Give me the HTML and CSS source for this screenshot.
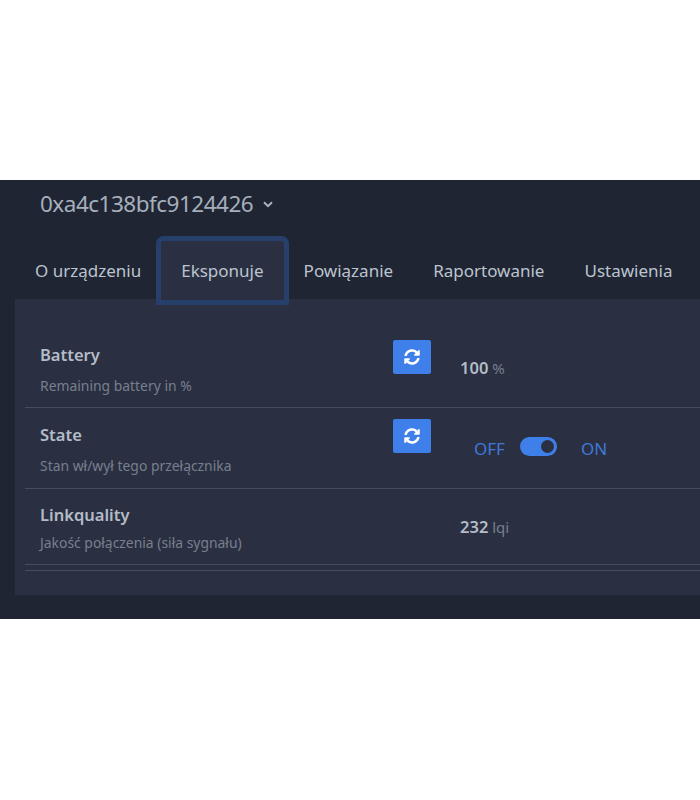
FILE: index.html
```html
<!DOCTYPE html>
<html lang="pl">
  <head>
    <meta charset="utf-8" />
    <title>0xa4c138bfc9124426</title>
    <link rel="stylesheet" href="styles.css">
  </head>
  <body>
    <div class="device">
      <div class="device-title">
        <span>0xa4c138bfc9124426</span>
        <svg class="chevron" width="10" height="7" viewBox="0 0 10 7"><path d="M1 1.2 5 5.2 9 1.2" fill="none" stroke="#a9b2bf" stroke-width="2"/></svg>
      </div>
      <ul class="tabs">
        <li>O urządzeniu</li>
        <li class="active">Eksponuje</li>
        <li>Powiązanie</li>
        <li>Raportowanie</li>
        <li>Ustawienia</li>
      </ul>
      <div class="panel">
        <div class="row row-battery">
          <div class="info">
            <div class="name">Battery</div>
            <div class="desc">Remaining battery in %</div>
          </div>
          <button class="refresh" type="button">
            <svg width="16" height="16" viewBox="0 0 512 512"><path fill="#fff" d="M370.72 133.28C339.458 104.008 298.888 87.962 255.848 88c-77.458.068-144.328 53.178-162.791 126.85-1.344 5.363-6.122 9.15-11.651 9.15H24.103c-7.498 0-13.194-6.807-11.807-14.176C33.933 94.924 134.813 8 256 8c66.448 0 126.791 26.136 171.315 68.685L463.03 40.97C478.149 25.851 504 36.559 504 57.941V192c0 13.255-10.745 24-24 24H345.941c-21.382 0-32.09-25.851-16.971-40.971l41.75-41.749zM32 296h134.059c21.382 0 32.09 25.851 16.971 40.971l-41.75 41.75c31.262 29.273 71.835 45.319 114.876 45.28 77.418-.07 144.315-53.144 162.787-126.849 1.344-5.363 6.122-9.15 11.651-9.15h57.304c7.498 0 13.194 6.807 11.807 14.176C478.067 417.076 377.187 504 256 504c-66.448 0-126.791-26.136-171.315-68.685L48.97 471.03C33.851 486.149 8 475.441 8 454.059V320c0-13.255 10.745-24 24-24z"/></svg>
          </button>
          <div class="value"><b>100</b> <span>%</span></div>
        </div>
        <div class="row row-state">
          <div class="info">
            <div class="name">State</div>
            <div class="desc">Stan wł/wył tego przełącznika</div>
          </div>
          <button class="refresh" type="button">
            <svg width="16" height="16" viewBox="0 0 512 512"><path fill="#fff" d="M370.72 133.28C339.458 104.008 298.888 87.962 255.848 88c-77.458.068-144.328 53.178-162.791 126.85-1.344 5.363-6.122 9.15-11.651 9.15H24.103c-7.498 0-13.194-6.807-11.807-14.176C33.933 94.924 134.813 8 256 8c66.448 0 126.791 26.136 171.315 68.685L463.03 40.97C478.149 25.851 504 36.559 504 57.941V192c0 13.255-10.745 24-24 24H345.941c-21.382 0-32.09-25.851-16.971-40.971l41.75-41.749zM32 296h134.059c21.382 0 32.09 25.851 16.971 40.971l-41.75 41.75c31.262 29.273 71.835 45.319 114.876 45.28 77.418-.07 144.315-53.144 162.787-126.849 1.344-5.363 6.122-9.15 11.651-9.15h57.304c7.498 0 13.194 6.807 11.807 14.176C478.067 417.076 377.187 504 256 504c-66.448 0-126.791-26.136-171.315-68.685L48.97 471.03C33.851 486.149 8 475.441 8 454.059V320c0-13.255 10.745-24 24-24z"/></svg>
          </button>
          <div class="switch">
            <span>OFF</span>
            <i class="toggle"></i>
            <span>ON</span>
          </div>
        </div>
        <div class="row row-link">
          <div class="info">
            <div class="name">Linkquality</div>
            <div class="desc">Jakość połączenia (siła sygnału)</div>
          </div>
          <div class="value"><b>232</b> <span>lqi</span></div>
        </div>
        <div class="rule"></div>
      </div>
    </div>
  </body>
</html>
```

FILE: styles.css
```css
body {
  margin: 0;
  background-color: #ffffff;
  font-family: "Noto Sans", "Open Sans", sans-serif;
}

.device {
  box-sizing: border-box;
  height: 439px;
  margin-top: 180px;
  padding-top: 6px;
  overflow: hidden;
  background-color: #1f2533;
}

.device-title {
  display: flex;
  align-items: center;
  gap: 10px;
  height: 34px;
  padding-left: 40px;
  font-size: 22.5px;
  letter-spacing: -0.5px;
  color: #a6afbc;
}
.chevron {
  margin-top: 3px;
}

.tabs {
  display: flex;
  box-sizing: border-box;
  height: 58px;
  margin: 21px 0 0 15px;
  padding: 0;
  list-style-type: none;
}
.tabs li {
  display: flex;
  align-items: center;
  flex: none;
  padding: 1px 20px 0;
  font-size: 17px;
  color: #bcc4cf;
  white-space: nowrap;
}
.tabs li.active {
  position: relative;
  z-index: 1;
  height: 59px;
  padding-top: 0;
  box-shadow: 0 0 0 5px #26406b;
  border-radius: 3px 3px 0 0;
  background-color: #2a3042;
}

.panel {
  box-sizing: border-box;
  height: 296px;
  margin-left: 15px;
  padding: 27px 0 0 10px;
  background-color: #2a3042;
}

.row {
  display: grid;
  grid-template-columns: 368px 38px 1fr;
  border-bottom: 1px solid #464c5d;
}
.row-battery {
  height: 81px;
}
.row-state {
  height: 80px;
}
.row-link {
  height: 75px;
}
.rule {
  height: 5px;
  border-bottom: 1px solid #464c5d;
}

.info {
  padding-left: 15px;
  grid-column: 1;
}
.name {
  margin-top: 17px;
  font-size: 16.5px;
  line-height: 24px;
  font-weight: 600;
  color: #b4bcc8;
}
.desc {
  margin-top: 9px;
  font-size: 13.9px;
  line-height: 20px;
  color: #787f8e;
}
.row-state .name {
  margin-top: 15px;
}
.row-link .name {
  margin-top: 14px;
}
.row-link .desc {
  margin-top: 6px;
}

.refresh {
  display: flex;
  align-items: center;
  justify-content: center;
  width: 38px;
  height: 34px;
  margin-top: 14px;
  padding: 0;
  border: 0;
  border-radius: 2px;
  background-color: #3f7fea;
}
.row-state .refresh {
  margin-top: 11px;
}

.value {
  margin: 30px 0 0 29px;
  font-size: 15px;
  line-height: 24px;
  color: #787f8e;
}
.value b {
  font-size: 16.5px;
  font-weight: 600;
  color: #b4bcc8;
}
.row-link .value {
  grid-column: 2 / 4;
  margin: 26px 0 0 67px;
}

.switch {
  display: flex;
  align-items: center;
  gap: 15px;
  margin: 28px 0 0 43px;
  height: 24px;
  font-size: 17px;
  color: #3f78d8;
}
.toggle {
  position: relative;
  width: 37px;
  height: 19px;
  margin: -3px 9px 0 0;
  border-radius: 10px;
  background-color: #3f7fea;
}
.toggle::after {
  content: '';
  position: absolute;
  top: 3px;
  right: 3px;
  width: 13px;
  height: 13px;
  border-radius: 50%;
  background-color: #2a3042;
}
```
